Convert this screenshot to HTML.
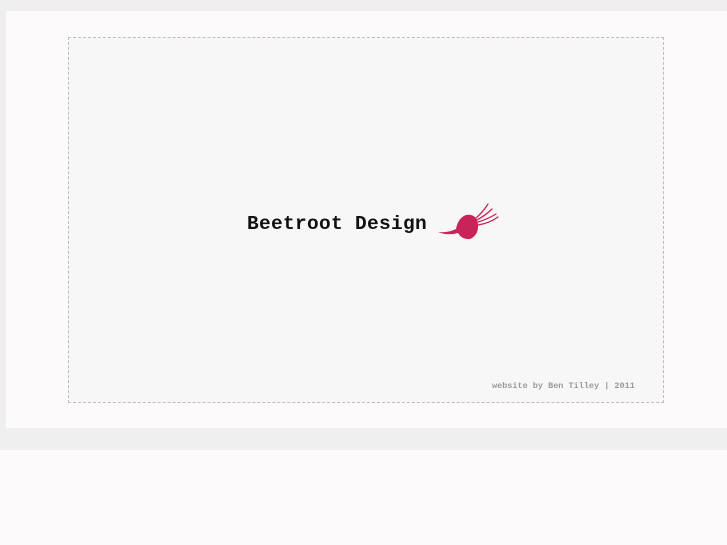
<!DOCTYPE html>
<html><head><style>
html,body{margin:0;padding:0;}
body{width:727px;height:545px;background:#fcfafa;position:relative;overflow:hidden;}
.top{position:absolute;left:0;top:0;width:727px;height:11px;background:#efefef;}
.band{position:absolute;left:0;top:428px;width:727px;height:22px;background:#efefef;}
.side{position:absolute;left:0;top:11px;width:6px;height:417px;background:#efefef;}
.panel{position:absolute;left:6px;top:11px;width:721px;height:417px;background:#fcfafa;}
.box{position:absolute;left:68px;top:37px;width:594px;height:364px;border:1px dashed #bdbdbd;background:#f8f7f7;}
.title{position:absolute;left:247px;top:213px;font:bold 19.5px "Liberation Mono",monospace;letter-spacing:0.3px;color:#111;}
.foot{position:absolute;left:492px;top:381px;font:bold 8.5px "Liberation Mono",monospace;color:#9a9a9a;}
</style></head><body>
<div class="top"></div><div class="side"></div><div class="panel"></div><div class="band"></div>
<div class="box"></div>
<div class="title">Beetroot Design</div>
<svg style="position:absolute;left:436px;top:202px" width="66" height="40" viewBox="0 0 66 40">
<path d="M2 30 Q12 31 20 27 Q22 16 30 13 Q40 11 42 22 Q43 33 34 37 Q26 38 22 31 Q12 34 2 30Z" fill="#c8245a"/>
<g stroke="#c8245a" stroke-width="1.3" fill="none" stroke-linecap="round">
<path d="M40 16 Q47 10 52 2"/>
<path d="M41 18 Q50 13 56 7"/>
<path d="M42 20 Q52 17 60 12"/>
<path d="M42 23 Q54 21 62 15"/>
</g></svg>
<div class="foot">website by Ben Tilley | 2011</div>
</body></html>
